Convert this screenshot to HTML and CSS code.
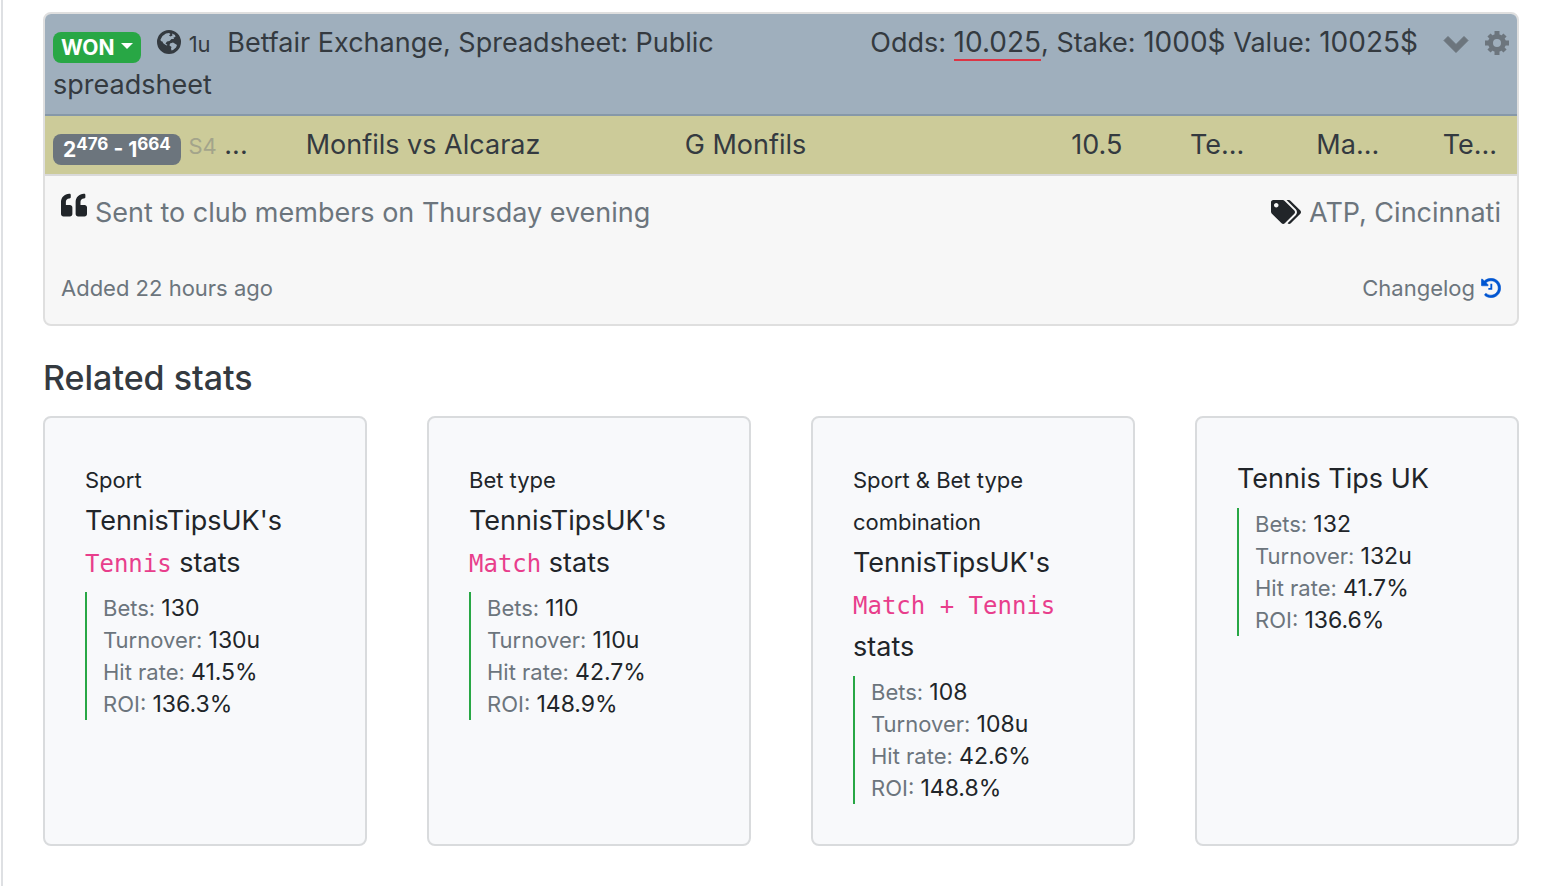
FILE: index.html
```html
<!DOCTYPE html>
<html lang="en">
<head>
<meta charset="utf-8">
<title>Tip details</title>
<link rel="stylesheet" href="styles.css">
</head>
<body>
<main class="panel">
  <article class="tip">
    <header class="tip-head">
      <div class="tip-source">
        <button class="badge badge-won" type="button">WON<span class="caret"></span></button>
        <svg class="icon-globe" viewBox="0 0 24 24" aria-hidden="true"><path fill-rule="evenodd" d="M12 0a12 12 0 1 0 0 24 12 12 0 0 0 0-24zM3.500 9.500L5.500 6 9 3.500l3-.5 1.500 1-1.500 1.500 1.500 1 2-1-.5-2 3 1.500.5 2-2 .5.5 1.500-2.500 0-2 2-2.500.5-1.500 2 2 1.500-1 .5-3-2-1.500-2.500-1 .5zM13 13.500l3-1 2.500 1.500 1.500 1-1 2.500-3 2.500-1.500.5-.5-2 .5-1.500-2-1.500z"/></svg>
        <small class="units">1u</small>
        <span class="bookmaker">Betfair Exchange, Spreadsheet: Public spreadsheet</span>
      </div>
      <div class="tip-money">Odds: <span class="num odds">10.025</span>, Stake: <span class="num">1000$</span> Value: <span class="num">10025$</span></div>
      <div class="tip-actions">
        <button type="button" aria-label="Expand"><svg viewBox="0 0 26 24"><path d="M5 5.500l8 8 8-8 4 4L13 21.500 1 9.500z" stroke="currentColor" stroke-linejoin="round"/></svg></button>
        <button type="button" aria-label="Settings"><svg viewBox="0 0 24 24" fill="none" stroke="currentColor"><circle cx="12" cy="12" r="6.500" fill="none" stroke-width="5"/><path stroke-width="5" d="M12 0v5M12 19v5M0 12h5M19 12h5"/><path stroke-width="4.500" d="M4 4l3.500 3.500M16.500 16.500L20 20M20 4l-3.500 3.500M7.500 16.500L4 20"/></svg></button>
      </div>
    </header>
    <div class="selection">
      <div class="cell span-2"><span class="badge badge-score">2<sup>476</sup> - 1<sup>664</sup></span> <small class="sets">S4</small> ...</div>
      <div class="cell span-3">Monfils vs Alcaraz</div>
      <div class="cell span-3">G Monfils</div>
      <div class="cell center">10.5</div>
      <div class="cell">Te...</div>
      <div class="cell">Ma...</div>
      <div class="cell">Te...</div>
    </div>
    <div class="tip-body">
      <div class="row">
        <div class="note"><svg class="icon-quote" viewBox="0 0 512 512" aria-hidden="true"><path d="M464 256h-80v-64c0-35.300 28.700-64 64-64h8c13.300 0 24-10.700 24-24V56c0-13.300-10.700-24-24-24h-8c-88.400 0-160 71.600-160 160v240c0 26.500 21.500 48 48 48h128c26.500 0 48-21.500 48-48V304c0-26.500-21.500-48-48-48zm-288 0H96v-64c0-35.300 28.700-64 64-64h8c13.300 0 24-10.700 24-24V56c0-13.300-10.700-24-24-24h-8C71.600 32 0 103.600 0 192v240c0 26.500 21.500 48 48 48h128c26.500 0 48-21.500 48-48V304c0-26.500-21.500-48-48-48z"/></svg>Sent to club members on Thursday evening</div>
        <div class="tags"><svg class="icon-tags" viewBox="0 0 640 512" aria-hidden="true"><path d="M497.941 225.941L286.059 14.059A48 48 0 0 0 252.118 0H48C21.490 0 0 21.490 0 48v204.118a48 48 0 0 0 14.059 33.941l211.882 211.882c18.744 18.745 49.136 18.746 67.882 0l204.118-204.118c18.745-18.745 18.745-49.137 0-67.882zM112 160c-26.510 0-48-21.490-48-48s21.490-48 48-48 48 21.490 48 48-21.490 48-48 48zm513.941 133.823L421.823 497.941c-18.745 18.745-49.137 18.745-67.882 0l-.360-.360L527.640 323.522c16.999-16.999 26.360-39.600 26.360-63.640s-9.362-46.641-26.360-63.640L331.397 0h48.721a48 48 0 0 1 33.941 14.059l211.882 211.882c18.745 18.745 18.745 49.137 0 67.882z"/></svg>ATP, Cincinnati</div>
      </div>
      <div class="row meta">
        <span>Added 22 hours ago</span>
        <a href="#changelog" class="changelog">Changelog<svg class="icon-history" viewBox="0 0 512 512" aria-hidden="true"><path stroke="currentColor" stroke-width="14" d="M504 255.531c.253 136.640-111.180 248.372-247.820 248.468-59.015.042-113.223-20.530-155.822-54.911-11.077-8.940-11.905-25.541-1.839-35.607l11.267-11.267c8.609-8.609 22.353-9.551 31.891-1.984C173.062 425.135 212.781 440 256 440c101.705 0 184-82.311 184-184 0-101.705-82.311-184-184-184-48.814 0-93.149 18.969-126.068 49.932l50.754 50.754c10.080 10.080 2.941 27.314-11.313 27.314H24c-8.837 0-16-7.163-16-16V38.627c0-14.254 17.234-21.393 27.314-11.314l49.372 49.372C129.209 34.136 189.552 8 256 8c136.810 0 247.747 110.780 248 247.531z"/><path d="M240 150h48v148h-100v-42h52z"/></svg></a>
      </div>
    </div>
  </article>

  <h2 class="heading">Related stats</h2>
  <section class="stats">
    <article class="stat">
      <p class="title"><small>Sport</small><br>TennisTipsUK's <code>Tennis</code> stats</p>
      <dl><div><dt>Bets:</dt> <dd>130</dd></div><div><dt>Turnover:</dt> <dd>130u</dd></div><div><dt>Hit rate:</dt> <dd>41.5%</dd></div><div><dt>ROI:</dt> <dd>136.3%</dd></div></dl>
    </article>
    <article class="stat">
      <p class="title"><small>Bet type</small><br>TennisTipsUK's <code>Match</code> stats</p>
      <dl><div><dt>Bets:</dt> <dd>110</dd></div><div><dt>Turnover:</dt> <dd>110u</dd></div><div><dt>Hit rate:</dt> <dd>42.7%</dd></div><div><dt>ROI:</dt> <dd>148.9%</dd></div></dl>
    </article>
    <article class="stat">
      <p class="title"><small>Sport &amp; Bet type combination</small><br>TennisTipsUK's <code>Match + Tennis</code> stats</p>
      <dl><div><dt>Bets:</dt> <dd>108</dd></div><div><dt>Turnover:</dt> <dd>108u</dd></div><div><dt>Hit rate:</dt> <dd>42.6%</dd></div><div><dt>ROI:</dt> <dd>148.8%</dd></div></dl>
    </article>
    <article class="stat">
      <p class="title">Tennis Tips UK</p>
      <dl><div><dt>Bets:</dt> <dd>132</dd></div><div><dt>Turnover:</dt> <dd>132u</dd></div><div><dt>Hit rate:</dt> <dd>41.7%</dd></div><div><dt>ROI:</dt> <dd>136.6%</dd></div></dl>
    </article>
  </section>
</main>
</body>
</html>
```
FILE: styles.css
```css
* { box-sizing: border-box; }
body {
  margin: 0;
  background: #fff;
  color: #212529;
  font: 400 27px/42px Inter, "Liberation Sans", sans-serif;
}
button { font: inherit; border: 0; padding: 0; background: none; cursor: pointer; }
small { font-size: 22px; line-height: 1; }
svg { fill: currentColor; }
.panel {
  min-height: 100vh;
  margin-left: 1px;
  border-left: 2px solid #dee0e3;
  padding: 12px 30px 40px 40px;
}
.tip {
  border: 2px solid #dfdfdf;
  border-radius: 8px;
  overflow: hidden;
  background: #f7f7f7;
}
.tip-head {
  display: flex;
  align-items: flex-start;
  padding: 8px;
  border-bottom: 2px solid #8698a8;
  background: #9fafbd;
  color: #343a40;
}
.tip-source { flex: 1; }
.tip-money { margin-left: 24px; white-space: nowrap; }
.num { font-size: 28px; line-height: 1; }
.odds { border-bottom: 2px solid #dc3545; }
.tip-actions { display: flex; align-items: center; height: 42px; gap: 16px; margin-left: 25px; color: #6c757d; }
.tip-actions button { display: flex; color: inherit; }
.tip-actions svg { height: 24px; }
.badge {
  display: inline-block;
  padding: 0 8px;
  border-radius: 8px;
  color: #fff;
  font-size: 21px;
  font-weight: 700;
  line-height: 31px;
  vertical-align: -3px;
}
.badge-won { background: #28a745; }
.caret {
  display: inline-block;
  margin-left: 7px;
  vertical-align: 6px;
  border: 6px solid transparent;
  border-top-color: #fff;
  border-bottom: 0;
}
.icon-globe { width: 24px; height: 24px; margin-left: 8px; vertical-align: -2px; }
.bookmaker { margin-left: 9px; }
.selection {
  display: grid;
  grid-template-columns: repeat(12, minmax(0, 1fr));
  column-gap: 60px;
  padding: 8px;
  border-bottom: 2px solid #d9d9d9;
  background: #cccb99;
  color: #343a40;
}
.cell { white-space: nowrap; }
.span-2 { grid-column: span 2; }
.span-3 { grid-column: span 3; }
.center { text-align: center; }
.badge-score { padding: 0 10px; background: #6c757d; }
.badge sup { font-size: 17px; line-height: 0; vertical-align: 7px; }
.sets { color: #a3a48b; }
.tip-body { padding: 16px 16px 15px; color: #6c757d; }
.row { display: flex; justify-content: space-between; }
.meta { margin-top: 33px; font-size: 22px; }
.icon-quote { width: 26px; height: 26px; margin-right: 8px; vertical-align: 4px; color: #212529; }
.icon-tags { width: 30px; height: 24px; margin-right: 8px; vertical-align: -2px; color: #212529; }
.changelog { color: inherit; text-decoration: none; }
.icon-history { width: 20px; height: 20px; margin-left: 6px; vertical-align: -2px; color: #0056d2; }
.heading { margin: 31px 0 17px; color: #343a40; font-size: 34px; font-weight: 500; line-height: 42px; }
.stats { display: grid; grid-template-columns: repeat(4, minmax(0, 1fr)); gap: 60px; }
.stat { padding: 40px; border: 2px solid #d9dbdd; border-radius: 8px; background: #f8f9fb; }
.title { margin: 0 0 8px; }
code { color: #e83e8c; font: 24px/1 "DejaVu Sans Mono", monospace; }
dl { margin: 0; padding-left: 16px; border-left: 2px solid #28a745; font-size: 22px; line-height: 32px; }
dt, dd { display: inline; margin: 0; }
dt { color: #6c757d; }
dd { font-size: 23px; line-height: 1; }
```
